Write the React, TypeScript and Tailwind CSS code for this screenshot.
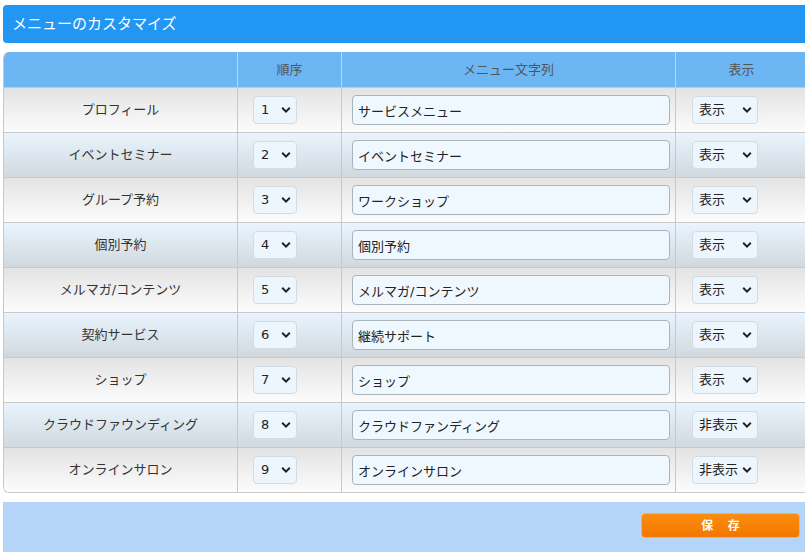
import { useState } from "react";

type MenuRow = {
  label: string;
  text: string;
  visible: boolean;
};

const initialRows: MenuRow[] = [
  { label: "プロフィール", text: "サービスメニュー", visible: true },
  { label: "イベントセミナー", text: "イベントセミナー", visible: true },
  { label: "グループ予約", text: "ワークショップ", visible: true },
  { label: "個別予約", text: "個別予約", visible: true },
  { label: "メルマガ/コンテンツ", text: "メルマガ/コンテンツ", visible: true },
  { label: "契約サービス", text: "継続サポート", visible: true },
  { label: "ショップ", text: "ショップ", visible: true },
  { label: "クラウドファウンディング", text: "クラウドファンディング", visible: false },
  { label: "オンラインサロン", text: "オンラインサロン", visible: false },
];

const font = "font-['DejaVu_Sans','Noto_Sans_CJK_JP',sans-serif]";

function Chevron() {
  return (
    <svg
      className="pointer-events-none absolute right-[6px] top-1/2 -translate-y-1/2"
      width="10"
      height="7"
      viewBox="0 0 10 7"
    >
      <path d="M1.2 1.3 5 5.1 8.8 1.3" fill="none" stroke="#222" strokeWidth="2" />
    </svg>
  );
}

export default function App() {
  const [rows, setRows] = useState(initialRows);

  const update = (i: number, patch: Partial<MenuRow>) => {
    setRows((prev) => prev.map((r, idx) => (idx === i ? { ...r, ...patch } : r)));
  };

  return (
    <div className={`w-[805px] h-[552px] overflow-hidden bg-white ${font}`}>
      <div className="ml-[3px] w-[804px] pt-[5px]">
        {/* タイトルバー */}
        <div className="h-[38px] bg-[#2196f3] rounded-l-[4px] flex items-center pl-[9px] text-white text-[15px]">
          メニューのカスタマイズ
        </div>

        {/* メニュー一覧 */}
        <div className="mt-[9px] border-l border-b border-[#c8c8c8] rounded-l-[6px] overflow-hidden">
          <div className="flex h-[35px] bg-[#6cb6f4] text-[13px] text-[#555]">
            <div className="w-[234px] border-r border-[#b9d7f0]" />
            <div className="w-[104px] border-r border-[#b9d7f0] flex items-center justify-center">
              順序
            </div>
            <div className="w-[334px] border-r border-[#b9d7f0] flex items-center justify-center">
              メニュー文字列
            </div>
            <div className="flex-1 flex items-center justify-center">表示</div>
          </div>

          {rows.map((row, i) => (
            <div
              key={row.label}
              className={`flex h-[45px] border-t border-[#c8c8c8] bg-gradient-to-b ${
                i % 2 === 0 ? "from-[#e3e3e3] to-[#fcfcfc]" : "from-[#e9f4fe] to-[#d1d9de]"
              }`}
            >
              <div className="w-[234px] border-r border-[#c8c8c8] flex items-center justify-center text-[13px] text-[#333]">
                {row.label}
              </div>
              <div className="w-[104px] border-r border-[#c8c8c8] flex items-center pl-[15px]">
                <div className="relative">
                  <select
                    value={i + 1}
                    onChange={() => {}}
                    className="appearance-none w-[44px] h-[28px] pl-[7px] rounded-[4px] border border-[#d3dbe2] bg-[#eef6fd] text-[13px] text-[#222] outline-none"
                  >
                    {rows.map((_, n) => (
                      <option key={n} value={n + 1}>
                        {n + 1}
                      </option>
                    ))}
                  </select>
                  <Chevron />
                </div>
              </div>
              <div className="w-[334px] border-r border-[#c8c8c8] flex items-center pl-[10px]">
                <input
                  value={row.text}
                  onChange={(e) => update(i, { text: e.target.value })}
                  className="w-[318px] h-[30px] px-[5px] rounded-[4px] border border-[#aab4bc] bg-[#f0f8ff] text-[13px] text-[#222] outline-none"
                />
              </div>
              <div className="flex-1 flex items-center pl-[16px]">
                <div className="relative">
                  <select
                    value={row.visible ? "1" : "0"}
                    onChange={(e) => update(i, { visible: e.target.value === "1" })}
                    className="appearance-none w-[66px] h-[28px] pl-[6px] rounded-[4px] border border-[#d3dbe2] bg-[#eef6fd] text-[13px] text-[#222] outline-none"
                  >
                    <option value="1">表示</option>
                    <option value="0">非表示</option>
                  </select>
                  <Chevron />
                </div>
              </div>
            </div>
          ))}
        </div>

        {/* 保存 */}
        <div className="mt-[9px] h-[60px] bg-[#b5d5f8] flex justify-end items-start pt-[11px] pr-[7px]">
          <button className="w-[159px] h-[25px] rounded-[4px] border border-[#f5b060] bg-gradient-to-b from-[#fb8d0e] to-[#f27600] text-white text-[12px] font-bold tracking-[1.2em] pl-[1.2em]">
            保存
          </button>
        </div>
      </div>
    </div>
  );
}
